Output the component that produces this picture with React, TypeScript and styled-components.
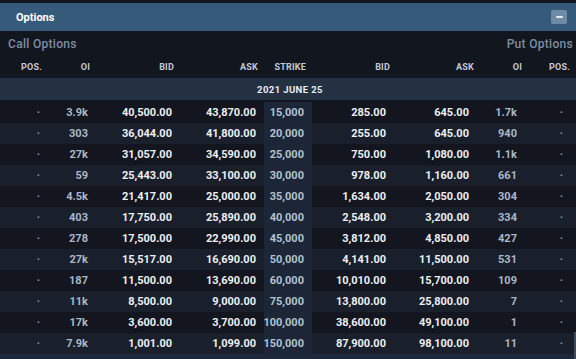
import React from "react";
import styled, { createGlobalStyle } from "styled-components";

const GlobalStyle = createGlobalStyle`
  html, body {
    margin: 0;
    padding: 0;
    background: #0e1117;
  }
  body {
    font-family: Roboto, "Liberation Sans", sans-serif;
    -webkit-font-smoothing: antialiased;
  }
`;

const HEAD_COLS = "48px 48px 84px 84px 48px 84px 84px 48px 48px";
const BODY_COLS = "48px 48px 84px 84px 48px 82px 83px 48px 46px";

const Panel = styled.div`
  position: relative;
  width: 576px;
  height: 359px;
  overflow: hidden;
  padding-top: 3px;
  box-sizing: border-box;
  background: #12161e;
  display: flex;
  flex-direction: column;
`;

const TitleBar = styled.div`
  height: 28px;
  flex: none;
  display: flex;
  align-items: center;
  justify-content: space-between;
  padding: 0 9px 0 16px;
  background: #365a7a;
`;

const Title = styled.span`
  color: #ffffff;
  font-size: 11px;
  font-weight: 700;
`;

const MinButton = styled.button`
  width: 16px;
  height: 14px;
  padding: 0;
  border: none;
  border-radius: 2px;
  background: #6f8aa6;
  display: flex;
  align-items: center;
  justify-content: center;

  &::after {
    content: "";
    width: 7px;
    height: 2px;
    border-radius: 1px;
    background: #e6ecf2;
  }
`;

const SideLabels = styled.div`
  height: 25px;
  flex: none;
  display: flex;
  align-items: center;
  justify-content: space-between;
  padding: 0 3px 0 8px;
  color: #7d8ea3;
  font-size: 12px;
  font-weight: 500;
  letter-spacing: 0.3px;
`;

const HeadRow = styled.div`
  height: 22px;
  flex: none;
  display: grid;
  grid-template-columns: ${HEAD_COLS};
  align-items: center;
`;

const HeadCell = styled.div`
  text-align: right;
  padding-right: 6px;
  color: #c2cad5;
  font-size: 9px;
  font-weight: 700;
  letter-spacing: 0.2px;
`;

const DateBand = styled.div`
  height: 22px;
  flex: none;
  margin-bottom: 2px;
  display: flex;
  align-items: center;
  justify-content: center;
  padding-left: 4px;
  background: #233143;
  color: #e8edf3;
  font-size: 9.5px;
  font-weight: 700;
  letter-spacing: 0.4px;
`;

const Row = styled.div<{ $alt: boolean }>`
  height: 21px;
  flex: none;
  display: grid;
  grid-template-columns: ${BODY_COLS};
  align-items: stretch;
  background: ${(p) => (p.$alt ? "#19202c" : "#13161e")};
`;

type Tone = "value" | "oi" | "dot" | "strike";

const toneColor: Record<Tone, string> = {
  value: "#eceff4",
  oi: "#aab7c7",
  dot: "#8995a5",
  strike: "#b3c2d3",
};

const Cell = styled.div<{ $tone: Tone }>`
  display: flex;
  align-items: center;
  justify-content: flex-end;
  padding-right: 8px;
  font-size: 11px;
  font-weight: 700;
  color: ${(p) => toneColor[p.$tone]};
  background: ${(p) => (p.$tone === "strike" ? "#1c2636" : "transparent")};
`;

const Footer = styled.div`
  flex: 1;
  background: #1c2839;
`;

const ScrollThumb = styled.div`
  position: absolute;
  right: 0;
  top: 332px;
  width: 2px;
  bottom: 0;
  background: #3b4b60;
`;

const rows = [
  ["3.9k", "40,500.00", "43,870.00", "15,000", "285.00", "645.00", "1.7k"],
  ["303", "36,044.00", "41,800.00", "20,000", "255.00", "645.00", "940"],
  ["27k", "31,057.00", "34,590.00", "25,000", "750.00", "1,080.00", "1.1k"],
  ["59", "25,443.00", "33,100.00", "30,000", "978.00", "1,160.00", "661"],
  ["4.5k", "21,417.00", "25,000.00", "35,000", "1,634.00", "2,050.00", "304"],
  ["403", "17,750.00", "25,890.00", "40,000", "2,548.00", "3,200.00", "334"],
  ["278", "17,500.00", "22,990.00", "45,000", "3,812.00", "4,850.00", "427"],
  ["27k", "15,517.00", "16,690.00", "50,000", "4,141.00", "11,500.00", "531"],
  ["187", "11,500.00", "13,690.00", "60,000", "10,010.00", "15,700.00", "109"],
  ["11k", "8,500.00", "9,000.00", "75,000", "13,800.00", "25,800.00", "7"],
  ["17k", "3,600.00", "3,700.00", "100,000", "38,600.00", "49,100.00", "1"],
  ["7.9k", "1,001.00", "1,099.00", "150,000", "87,900.00", "98,100.00", "11"],
];

const headers = ["POS.", "OI", "BID", "ASK", "STRIKE", "BID", "ASK", "OI", "POS."];

export default function App() {
  return (
    <>
      <GlobalStyle />
      <Panel>
        <TitleBar>
          <Title>Options</Title>
          <MinButton aria-label="Minimize" />
        </TitleBar>
        <SideLabels>
          <span>Call Options</span>
          <span>Put Options</span>
        </SideLabels>
        <HeadRow>
          {headers.map((h, i) => (
            <HeadCell key={i}>{h}</HeadCell>
          ))}
        </HeadRow>
        <DateBand>2021 JUNE 25</DateBand>
        {rows.map(([coi, cbid, cask, strike, pbid, pask, poi], i) => (
          <Row key={strike} $alt={i % 2 === 1}>
            <Cell $tone="dot">·</Cell>
            <Cell $tone="oi">{coi}</Cell>
            <Cell $tone="value">{cbid}</Cell>
            <Cell $tone="value">{cask}</Cell>
            <Cell $tone="strike">{strike}</Cell>
            <Cell $tone="value">{pbid}</Cell>
            <Cell $tone="value">{pask}</Cell>
            <Cell $tone="oi">{poi}</Cell>
            <Cell $tone="dot">·</Cell>
          </Row>
        ))}
        <Footer />
        <ScrollThumb />
      </Panel>
    </>
  );
}
